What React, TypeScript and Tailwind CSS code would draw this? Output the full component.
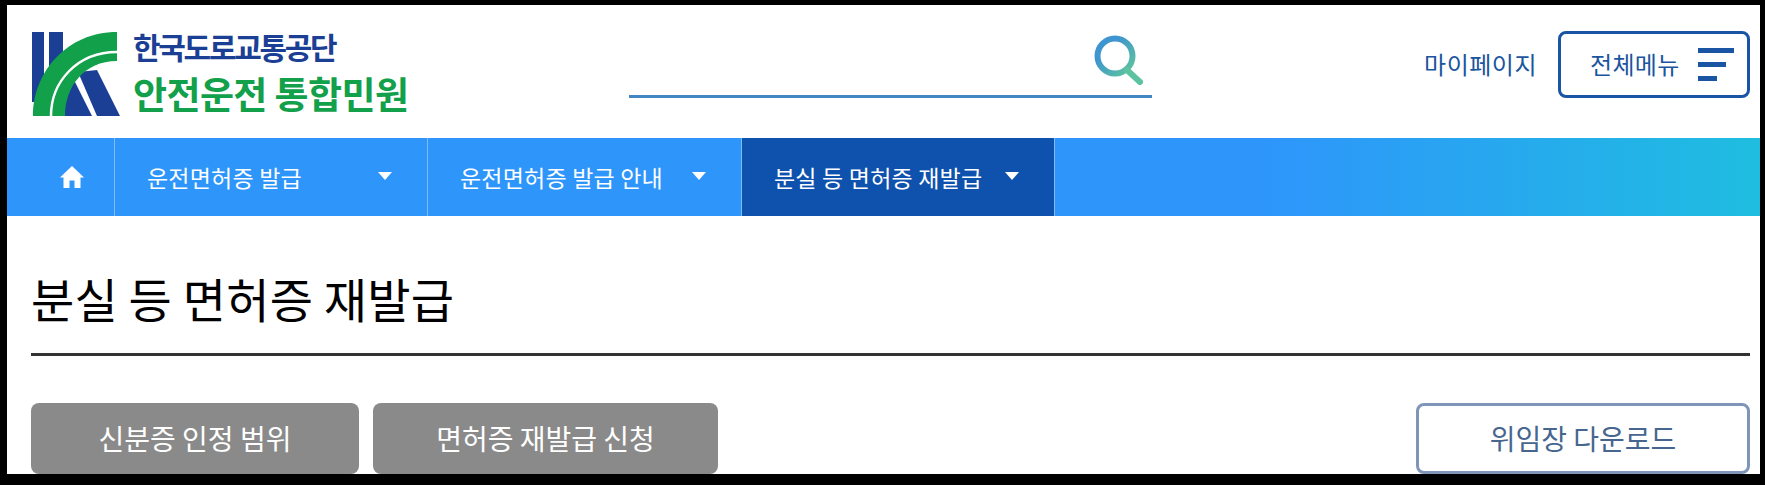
import React from 'react';

const font = { fontFamily: '"Noto Sans CJK KR", "Noto Sans", sans-serif' };

const navItems = [
	{ label: '운전면허증 발급', width: 'w-[313px]', active: false },
	{ label: '운전면허증 발급 안내', width: 'w-[314px]', active: false },
	{ label: '분실 등 면허증 재발급', width: 'w-[313px]', active: true },
];

function Logo() {
	return (
		<svg width="90" height="85" viewBox="0 0 90 85" className="shrink-0">
			<rect x="0" y="0" width="12" height="70" fill="#1b3f94" />
			<rect x="17" y="0" width="14" height="40" fill="#1b3f94" />
			<polygon points="46,40 65,38 88,84 65,84" fill="#1b3f94" />
			<polygon points="33,84 33,50 41,46 60,84" fill="#1b3f94" />
			<path d="M1 84 C1 40 35 0 85 0 L85 29 C52 29 33 55 33 84 Z" fill="#12a04a" />
			<path d="M19 84 C19 50 45 20 85 20" stroke="#fff" strokeWidth="2.5" fill="none" />
		</svg>
	);
}

function SearchIcon() {
	return (
		<svg width="52" height="50" viewBox="0 0 52 50">
			<defs>
				<linearGradient id="sg" x1="0" y1="0" x2="1" y2="1">
					<stop offset="0.3" stopColor="#3f95cf" />
					<stop offset="1" stopColor="#5fc79a" />
				</linearGradient>
			</defs>
			<circle cx="21" cy="21" r="17.5" fill="none" stroke="url(#sg)" strokeWidth="6" />
			<path d="M33 35 L46 47" stroke="#5cc29f" strokeWidth="6" strokeLinecap="round" />
		</svg>
	);
}

export default function App() {
	return (
		<div style={font} className="h-[485px] w-[1765px] bg-black pt-[5px] pl-[7px] pr-[5px] pb-[11px] overflow-hidden">
			<div className="h-full bg-white flex flex-col">
				{/* header */}
				<header className="h-[133px] flex items-center pl-[25px] pr-[10px] shrink-0">
					<div className="w-[597px] flex items-center gap-[11px]">
						<div className="mt-[5px]"><Logo /></div>
						<div className="flex flex-col gap-[13px] -mt-[1px]">
							<span className="text-[30px] leading-[30px] font-bold text-[#1b3f94] tracking-[-2.3px]">한국도로교통공단</span>
							<span className="text-[37px] leading-[38px] font-bold text-[#12a04a] tracking-[-0.6px]">안전운전 통합민원</span>
						</div>
					</div>
					<div className="w-[523px] h-[62px] -mt-[10px] border-b-[3px] border-[#4286c2] flex justify-end items-start pr-[6px]">
						<div className="-mt-[1px]"><SearchIcon /></div>
					</div>
					<div className="ml-auto -mt-[15px] flex items-center gap-[21px]">
						<a className="text-[24px] tracking-[0.5px] text-[#1b559f]">마이페이지</a>
						<button className="w-[192px] h-[67px] border-[3px] border-[#1a54a4] rounded-lg flex items-center pl-[29px] gap-[18px] text-[24px] tracking-[0.3px] text-[#1b559f]">
							전체메뉴
							<span className="flex flex-col gap-[9px]">
								<span className="block w-[36px] h-[5px] bg-[#1a54a4]" />
								<span className="block w-[28px] h-[5px] bg-[#1a54a4]" />
								<span className="block w-[19px] h-[5px] bg-[#1a54a4]" />
							</span>
						</button>
					</div>
				</header>

				{/* nav */}
				<nav className="h-[78px] shrink-0 flex bg-[linear-gradient(90deg,#2e96fb_0%,#2e96fb_72%,#1fbde0_100%)] text-white">
					<a className="w-[108px] flex items-center pl-[53px] border-r border-[#7fbcf7]">
						<svg width="24" height="22" viewBox="0 0 24 22" fill="#fff">
							<path d="M12 0 L24 11.5 L20.5 11.5 L20.5 22 L14.5 22 L14.5 14.5 L9.5 14.5 L9.5 22 L3.5 22 L3.5 11.5 L0 11.5 Z" />
						</svg>
					</a>
					{navItems.map((item) => (
						<a
							key={item.label}
							className={`${item.width} ${item.active ? 'bg-[#0f52ae]' : ''} flex items-center justify-between pl-[32px] pr-[35px] border-r border-[#7fbcf7] text-[23px] tracking-[0.2px]`}
						>
							<span className="whitespace-nowrap">{item.label}</span>
							<span className="w-0 h-0 border-x-[7px] border-x-transparent border-t-[8px] border-t-white -mt-[2px]" />
						</a>
					))}
				</nav>

				{/* content */}
				<main className="flex-1 pl-6 pr-[10px] flex flex-col min-h-0">
					<div className="h-[140px] shrink-0 border-b-[3px] border-[#333] flex items-center">
						<h1 className="text-[47px] leading-none tracking-[0.2px] text-black mt-[26px]">분실 등 면허증 재발급</h1>
					</div>
					<div className="flex gap-[14px] mt-[47px] h-[71px] text-[28px]">
						<a className="w-[328px] bg-[#8a8a8a] text-white rounded-lg flex items-center justify-center pb-[2px]">신분증 인정 범위</a>
						<a className="w-[345px] bg-[#8a8a8a] text-white rounded-lg flex items-center justify-center pb-[2px]">면허증 재발급 신청</a>
						<a className="ml-auto w-[334px] border-[3px] border-[#7f96b8] text-[#46668f] rounded-lg flex items-center justify-center pb-[2px]">위임장 다운로드</a>
					</div>
				</main>
			</div>
		</div>
	);
}
